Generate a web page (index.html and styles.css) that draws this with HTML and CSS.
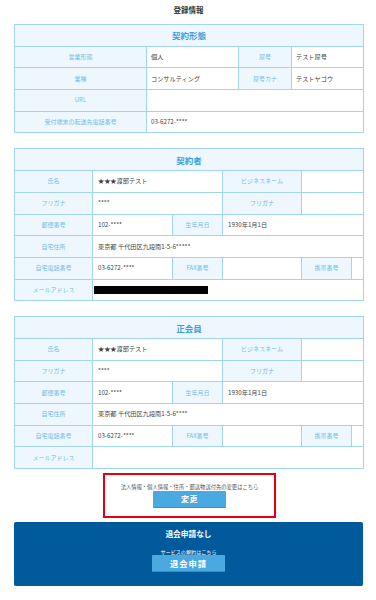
FILE: index.html
```html
<!DOCTYPE html>
<html lang="ja">
<head>
<meta charset="utf-8">
<link rel="stylesheet" href="styles.css">
</head>
<body>
<div class="page">
  <h1 class="title">登録情報</h1>

  <table class="info t4">
    <colgroup><col class="c1"><col class="c2"><col class="c3"><col class="c4"></colgroup>
    <tr><th class="head" colspan="4">契約形態</th></tr>
    <tr><th>営業形態</th><td>個人</td><th>屋号</th><td>テスト屋号</td></tr>
    <tr><th>業種</th><td>コンサルティング</td><th>屋号カナ</th><td>テストヤゴウ</td></tr>
    <tr><th>URL</th><td colspan="3"></td></tr>
    <tr><th>受付端末の転送先電話番号</th><td colspan="3">03-6272-****</td></tr>
  </table>

  <table class="info t6">
    <colgroup><col class="d1"><col class="d2"><col class="d3"><col class="d4"><col class="d5"><col class="d6"></colgroup>
    <tr><th class="head" colspan="6">契約者</th></tr>
    <tr><th>氏名</th><td colspan="2">★★★渡部テスト</td><th>ビジネスネーム</th><td colspan="2"></td></tr>
    <tr><th>フリガナ</th><td colspan="2">****</td><th>フリガナ</th><td colspan="2"></td></tr>
    <tr><th>郵便番号</th><td>102-****</td><th>生年月日</th><td colspan="3">1930年1月1日</td></tr>
    <tr><th>自宅住所</th><td colspan="5">東京都 千代田区九段南1-5-6*****</td></tr>
    <tr><th>自宅電話番号</th><td>03-6272-****</td><th>FAX番号</th><td></td><th>携帯番号</th><td></td></tr>
    <tr><th>メールアドレス</th><td colspan="5" class="mail"><span class="redact"></span></td></tr>
  </table>

  <table class="info t6 last">
    <colgroup><col class="d1"><col class="d2"><col class="d3"><col class="d4"><col class="d5"><col class="d6"></colgroup>
    <tr><th class="head" colspan="6">正会員</th></tr>
    <tr><th>氏名</th><td colspan="2">★★★渡部テスト</td><th>ビジネスネーム</th><td colspan="2"></td></tr>
    <tr><th>フリガナ</th><td colspan="2">****</td><th>フリガナ</th><td colspan="2"></td></tr>
    <tr><th>郵便番号</th><td>102-****</td><th>生年月日</th><td colspan="3">1930年1月1日</td></tr>
    <tr><th>自宅住所</th><td colspan="5">東京都 千代田区九段南1-5-6****</td></tr>
    <tr><th>自宅電話番号</th><td>03-6272-****</td><th>FAX番号</th><td></td><th>携帯番号</th><td></td></tr>
    <tr><th>メールアドレス</th><td colspan="5"></td></tr>
  </table>

  <div class="change">
    <p class="note">法人情報・個人情報・住所・郵送物送付先の変更はこちら</p>
    <a class="btn">変更</a>
  </div>

  <div class="withdraw">
    <p class="wtitle">退会申請なし</p>
    <p class="wnote">サービスの解約はこちら</p>
    <a class="btn btn-w">退会申請</a>
  </div>
</div>
</body>
</html>
```
FILE: styles.css
```css
* { box-sizing: border-box; }
html, body { margin: 0; padding: 0; background: #fff; }
body {
  font-family: "Noto Sans CJK JP", "Noto Sans", sans-serif;
  color: #333;
}
.page {
  width: 376px;
  padding: 0 13px 0 14px;
}
.title {
  margin: 0;
  padding-top: 5px;
  height: 24px;
  font-size: 7.5px;
  line-height: 10px;
  font-weight: bold;
  text-align: center;
  color: #333;
}
.info {
  width: 349px;
  border-collapse: collapse;
  table-layout: fixed;
  margin-bottom: 15px;
}
.info tr { height: 21.7px; }
.info th, .info td {
  border: 1px solid #a3d5f2;
  padding: 0;
  font-size: 6px;
  line-height: 8px;
  white-space: nowrap;
  overflow: hidden;
}
.info th {
  background: #eef7fd;
  color: #72bde8;
  font-weight: normal;
  text-align: center;
}
.info td {
  background: #fff;
  color: #444;
  text-align: left;
  padding-left: 4px;
  font-size: 6.2px;
}
.t6 td { padding-left: 5px; }
.info th.head {
  font-size: 8.5px;
  font-weight: bold;
  color: #3f9fdc;
  line-height: 10px;
}
.c1 { width: 132px; }
.c2 { width: 92px; }
.c3 { width: 53px; }
.c4 { width: 72px; }
.d1 { width: 78px; }
.d2 { width: 80px; }
.d3 { width: 50px; }
.d4 { width: 79px; }
.d5 { width: 50px; }
.d6 { width: 12px; }
.info td.mail { padding-left: 1px; }
.redact {
  display: block;
  width: 114px;
  height: 8px;
  background: #000;
  margin-top: 1px;
}
.info.last { margin-bottom: 4px; }
.change {
  width: 173px;
  margin: 0 auto 4px 89px;
  border: 2px solid #e60012;
  padding: 8px 0 8px;
  text-align: center;
}
.note {
  margin: 0;
  font-size: 5.3px;
  line-height: 8px;
  color: #555;
}
.btn {
  display: block;
  width: 73px;
  height: 17px;
  margin: 0 auto;
  background: #4aa9e1;
  border-bottom: 1px solid #3b90c6;
  color: #fff;
  font-weight: bold;
  font-size: 8px;
  line-height: 16px;
  letter-spacing: 0.5px;
  text-align: center;
  border-radius: 1px;
}
.withdraw {
  width: 349px;
  background: #015a9b;
  border-radius: 2px;
  padding: 7px 0 14px;
  text-align: center;
  color: #fff;
  box-shadow: 0 1px 1px rgba(0,0,0,0.2);
}
.wtitle {
  margin: 0;
  font-size: 7.7px;
  line-height: 10px;
  font-weight: bold;
}
.wnote {
  margin: 9px 0 0;
  font-size: 5.1px;
  line-height: 7px;
}
.btn-w {
  font-size: 8.3px;
  letter-spacing: 1px;
  border-bottom-color: #3a8cc0;
}
```
